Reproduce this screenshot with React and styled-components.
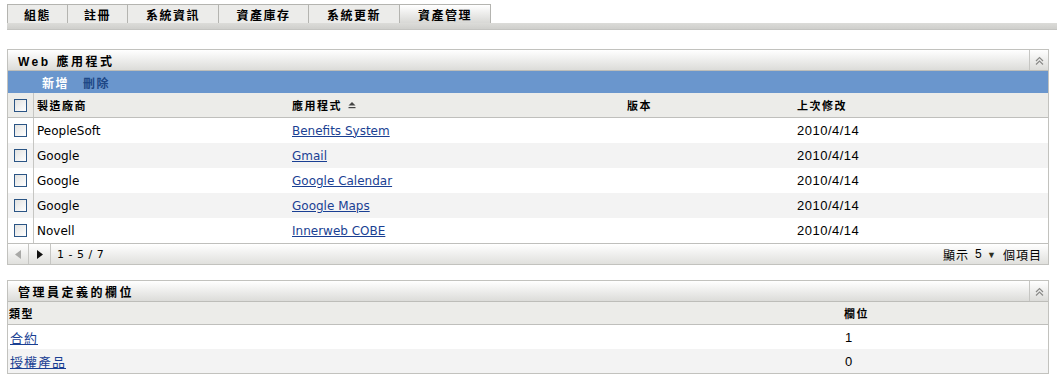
import React from "react";
import styled, { createGlobalStyle } from "styled-components";

const GlobalStyle = createGlobalStyle`
  body {
    margin: 0;
    background: #fff;
    font-family: "DejaVu Sans", "Noto Sans CJK TC", sans-serif;
    color: #000;
  }
`;

const CJK = `"Liberation Sans", "Noto Sans CJK TC", sans-serif`;

const Page = styled.div`
  padding-top: 4px;
  width: 1057px;
`;

const TabRow = styled.div`
  display: flex;
  margin-left: 7px;
`;

const Tab = styled.div`
  width: ${(p) => p.w}px;
  height: 19px;
  box-sizing: border-box;
  border: 1px solid #b4b4b0;
  border-left: ${(p) => (p.first ? "1px solid #b4b4b0" : "none")};
  border-bottom: none;
  background: ${(p) =>
    p.active ? "linear-gradient(#ffffff, #d8d8d5)" : "#ececea"};
  display: flex;
  align-items: center;
  justify-content: center;
  font-family: ${CJK};
  font-weight: bold;
  font-size: 12px;
  letter-spacing: 1.5px;
`;

const TabStrip = styled.div`
  margin-left: 7px;
  height: 6px;
  background: linear-gradient(#dcdcd9, #cfcfcc);
  border-bottom: 1px solid #c4c4c1;
`;

const Panel = styled.div`
  margin: ${(p) => p.top}px 8px 0 7px;
  border: 1px solid #c2c2be;
  background: #fff;
`;

const PanelHeader = styled.div`
  display: flex;
  height: 21px;
  box-sizing: border-box;
  background: linear-gradient(#ffffff, #dcdcd9);
  border-bottom: 1px solid #bdbdb9;
`;

const PanelTitle = styled.div`
  flex: 1;
  display: flex;
  align-items: center;
  padding-left: 10px;
  font-family: ${CJK};
  font-weight: bold;
  font-size: 12px;
  letter-spacing: 2.5px;
`;

const CollapseBtn = styled.div`
  width: 18px;
  border-left: 1px solid #c6c6c3;
  display: flex;
  align-items: center;
  justify-content: center;
`;

const ActionBar = styled.div`
  height: 22px;
  background: #6a96cd;
  display: flex;
  align-items: center;
  gap: 14px;
  padding-left: 34px;
`;

const Action = styled.span`
  font-family: ${CJK};
  font-weight: bold;
  font-size: 12px;
  letter-spacing: 1.5px;
  color: ${(p) => (p.dim ? "#1d4785" : "#ffffff")};
`;

const Row = styled.div`
  display: grid;
  grid-template-columns: ${(p) => p.cols};
  height: ${(p) => p.h || 25}px;
  box-sizing: border-box;
  background: ${(p) => (p.head ? "#ecece9" : p.alt ? "#f3f3f3" : "#fff")};
  border-bottom: ${(p) => (p.head ? "1px solid #bfbfbc" : "none")};
`;

const Cell = styled.div`
  display: flex;
  align-items: center;
  padding-left: ${(p) => p.pad ?? 4}px;
  border-right: ${(p) => (p.divider ? "1px solid #c6c6c3" : "none")};
  justify-content: ${(p) => (p.center ? "center" : "flex-start")};
  font-size: 12px;
  white-space: nowrap;
`;

const HeadText = styled.span`
  font-family: ${CJK};
  font-weight: bold;
  font-size: 11px;
  letter-spacing: 1.5px;
  display: flex;
  align-items: center;
  gap: 6px;
`;

const Text = styled.span`
  font-family: "DejaVu Sans", sans-serif;
  font-size: 12px;
`;

const DateText = styled.span`
  font-family: "Liberation Sans", sans-serif;
  font-size: 13px;
  letter-spacing: 0.5px;
`;

const Link = styled.a`
  color: #1a3f93;
  text-decoration: underline;
  font-family: ${(p) => (p.cjk ? CJK : `"DejaVu Sans", sans-serif`)};
  font-size: ${(p) => (p.cjk ? 13 : 12)}px;
  letter-spacing: ${(p) => (p.cjk ? "1px" : "0")};
  cursor: pointer;
`;

const Box = styled.span`
  width: 13px;
  height: 13px;
  box-sizing: border-box;
  border: 1px solid #2b5585;
  background: linear-gradient(135deg, #e2e2e0, #ffffff);
`;

const Footer = styled.div`
  display: flex;
  align-items: stretch;
  height: 20px;
  border-top: 1px solid #bfbfbc;
  background: linear-gradient(#ffffff, #e0e0dd);
`;

const PagerBtn = styled.div`
  width: ${(p) => p.w}px;
  border-right: 1px solid #c6c6c3;
  display: flex;
  align-items: center;
  justify-content: center;
`;

const PagerText = styled.div`
  display: flex;
  align-items: center;
  padding-left: 6px;
  flex: 1;
  font-family: "DejaVu Sans", sans-serif;
  font-size: 11px;
  letter-spacing: 0.5px;
`;

const PageSize = styled.div`
  display: flex;
  align-items: center;
  gap: 6px;
  padding-right: 6px;
  font-family: ${CJK};
  font-size: 12px;
  letter-spacing: 1px;
`;

const Caret = styled.span`
  font-size: 9px;
  color: #2f2f1f;
`;

const Chevrons = () => (
  <svg width="9" height="9" viewBox="0 0 9 9">
    <path d="M1 5 L4.5 1.5 L8 5 M1 8.5 L4.5 5 L8 8.5" fill="none" stroke="#8a8a88" strokeWidth="1.2" />
  </svg>
);

const SortIcon = () => (
  <svg width="8" height="8" viewBox="0 0 8 8">
    <path d="M0.5 4.5 L4 1 L7.5 4.5 Z" fill="#444" />
    <rect x="0.5" y="6" width="7" height="1.2" fill="#444" />
  </svg>
);

const Arrow = ({ dir, color }) => (
  <svg width="6" height="9" viewBox="0 0 6 9">
    {dir === "left" ? (
      <path d="M6 0 L0 4.5 L6 9 Z" fill={color} />
    ) : (
      <path d="M0 0 L6 4.5 L0 9 Z" fill={color} />
    )}
  </svg>
);

const tabs = [
  { label: "組態", w: 61 },
  { label: "註冊", w: 60 },
  { label: "系統資訊", w: 91 },
  { label: "資產庫存", w: 90 },
  { label: "系統更新", w: 91 },
  { label: "資產管理", w: 91, active: true },
];

const apps = [
  { vendor: "PeopleSoft", app: "Benefits System", date: "2010/4/14" },
  { vendor: "Google", app: "Gmail", date: "2010/4/14" },
  { vendor: "Google", app: "Google Calendar", date: "2010/4/14" },
  { vendor: "Google", app: "Google Maps", date: "2010/4/14" },
  { vendor: "Novell", app: "Innerweb COBE", date: "2010/4/14" },
];

const fields = [
  { type: "合約", count: "1" },
  { type: "授權產品", count: "0" },
];

const appCols = "26px 254px 335px 170px 1fr";
const fieldCols = "835px 1fr";

export default function App() {
  return (
    <Page>
      <GlobalStyle />
      <TabRow>
        {tabs.map((t, i) => (
          <Tab key={t.label} w={t.w} first={i === 0} active={t.active}>
            {t.label}
          </Tab>
        ))}
      </TabRow>
      <TabStrip />

      <Panel top={19}>
        <PanelHeader>
          <PanelTitle>Web 應用程式</PanelTitle>
          <CollapseBtn>
            <Chevrons />
          </CollapseBtn>
        </PanelHeader>
        <ActionBar>
          <Action>新增</Action>
          <Action dim>刪除</Action>
        </ActionBar>
        <Row head cols={appCols}>
          <Cell divider center pad={0}>
            <Box />
          </Cell>
          <Cell pad={3}>
            <HeadText>製造廠商</HeadText>
          </Cell>
          <Cell>
            <HeadText>
              應用程式 <SortIcon />
            </HeadText>
          </Cell>
          <Cell>
            <HeadText>版本</HeadText>
          </Cell>
          <Cell>
            <HeadText>上次修改</HeadText>
          </Cell>
        </Row>
        {apps.map((a, i) => (
          <Row key={a.app} cols={appCols} alt={i % 2 === 1}>
            <Cell divider center pad={0}>
              <Box />
            </Cell>
            <Cell pad={3}>
              <Text>{a.vendor}</Text>
            </Cell>
            <Cell>
              <Link>{a.app}</Link>
            </Cell>
            <Cell />
            <Cell>
              <DateText>{a.date}</DateText>
            </Cell>
          </Row>
        ))}
        <Footer>
          <PagerBtn w={20}>
            <Arrow dir="left" color="#a8a8a6" />
          </PagerBtn>
          <PagerBtn w={21}>
            <Arrow dir="right" color="#111" />
          </PagerBtn>
          <PagerText>1 - 5 / 7</PagerText>
          <PageSize>
            <span>顯示</span>
            <span>
              5 <Caret>▼</Caret>
            </span>
            <span>個項目</span>
          </PageSize>
        </Footer>
      </Panel>

      <Panel top={15}>
        <PanelHeader>
          <PanelTitle>管理員定義的欄位</PanelTitle>
          <CollapseBtn>
            <Chevrons />
          </CollapseBtn>
        </PanelHeader>
        <Row head h={23} cols={fieldCols}>
          <Cell pad={1}>
            <HeadText>類型</HeadText>
          </Cell>
          <Cell pad={1}>
            <HeadText>欄位</HeadText>
          </Cell>
        </Row>
        {fields.map((f, i) => (
          <Row key={f.type} h={24} cols={fieldCols} alt={i % 2 === 1}>
            <Cell pad={2}>
              <Link cjk>{f.type}</Link>
            </Cell>
            <Cell pad={2}>
              <DateText>{f.count}</DateText>
            </Cell>
          </Row>
        ))}
      </Panel>
    </Page>
  );
}
